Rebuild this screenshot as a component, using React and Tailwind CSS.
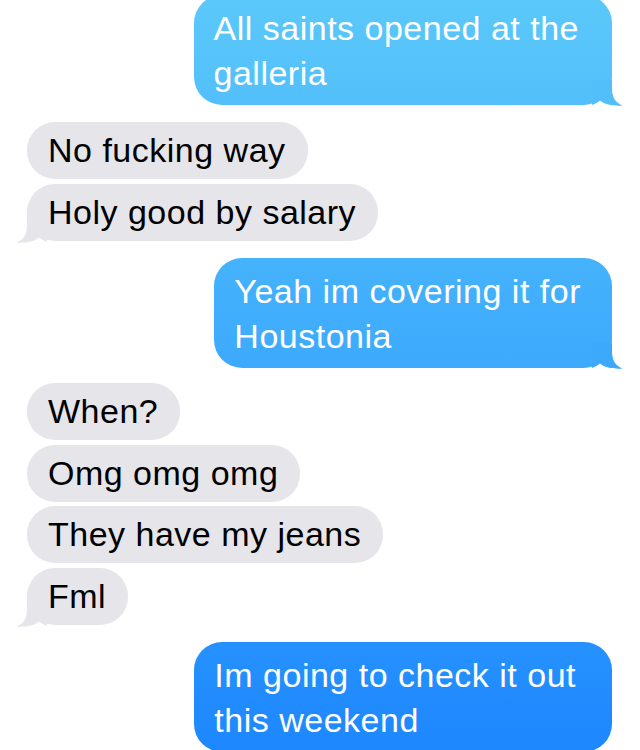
const tailPath =
  'M20 0 L20 8 C20 17 23 22.5 30.5 25.5 C23 26.2 13 25 8 20.5 Q4 24 0 25 L0 0 Z';

function Tail({ side, color }) {
  const pos =
    side === 'right'
      ? 'right-[-12px] bottom-[-1px]'
      : 'left-[-12px] bottom-[-2px] -scale-x-100';
  return (
    <svg
      className={`absolute ${pos} w-[32px] h-[26px]`}
      viewBox="0 0 32 26"
      aria-hidden="true"
    >
      <path d={tailPath} fill={color} />
    </svg>
  );
}

function Sent({ lines, tail, className = '' }) {
  return (
    <div
      className={`relative self-end mr-[28px] rounded-[28px] pl-[20px] pt-[11px] pb-[9px] text-white bg-fixed bg-linear-to-b from-[#5bc8fa] to-[#1d87fe] ${className}`}
    >
      {lines.map((l, i) => (
        <div key={i}>{l}</div>
      ))}
      {tail && <Tail side="right" color={tail} />}
    </div>
  );
}

function Received({ text, tail }) {
  return (
    <div className="relative rounded-[28px] bg-[#e5e5ea] pl-[21px] pr-[22px] py-[6px] text-black">
      {text}
      {tail && <Tail side="left" color="#e5e5ea" />}
    </div>
  );
}

export default function App() {
  return (
    <div className="w-[640px] h-[750px] overflow-hidden bg-white font-['Liberation_Sans',Arial,sans-serif] text-[34px] leading-[45px] tracking-[0.5px]">
      <div className="flex flex-col mt-[-5px]">
        <Sent
          className="pr-[33px]"
          lines={['All saints opened at the', 'galleria']}
          tail="#53bffa"
        />

        <div className="flex flex-col items-start gap-[5px] ml-[27px] mt-[17px]">
          <Received text="No fucking way" />
          <Received text="Holy good by salary" tail />
        </div>

        <Sent
          className="mt-[17px] pr-[31px]"
          lines={['Yeah im covering it for', 'Houstonia']}
          tail="#3da9fc"
        />

        <div className="flex flex-col items-start gap-[4.5px] ml-[27px] mt-[15px]">
          <Received text="When?" />
          <Received text="Omg omg omg" />
          <Received text="They have my jeans" />
          <Received text="Fml" tail />
        </div>

        <Sent
          className="mt-[17px] pr-[36px]"
          lines={['Im going to check it out', 'this weekend']}
        />
      </div>
    </div>
  );
}
